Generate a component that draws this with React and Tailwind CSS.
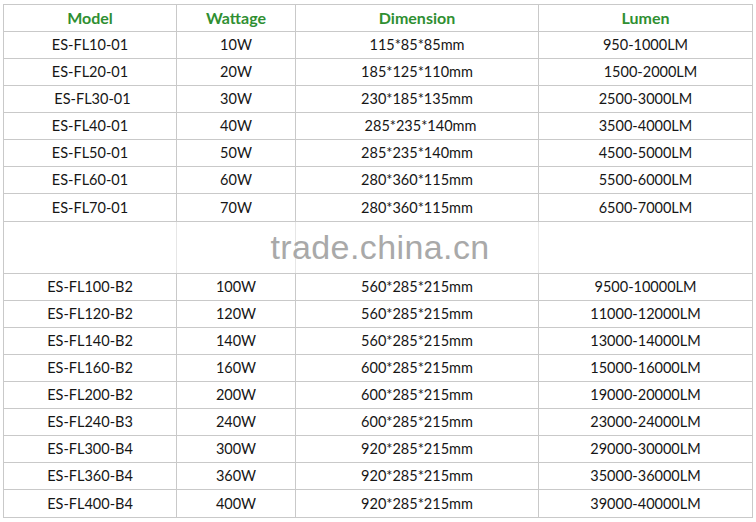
const TOP_ROWS = [
  ['ES-FL10-01', '10W', '115*85*85mm', '950-1000LM'],
  ['ES-FL20-01', '20W', '185*125*110mm', '1500-2000LM'],
  ['ES-FL30-01', '30W', '230*185*135mm', '2500-3000LM'],
  ['ES-FL40-01', '40W', '285*235*140mm', '3500-4000LM'],
  ['ES-FL50-01', '50W', '285*235*140mm', '4500-5000LM'],
  ['ES-FL60-01', '60W', '280*360*115mm', '5500-6000LM'],
  ['ES-FL70-01', '70W', '280*360*115mm', '6500-7000LM'],
];

const BOTTOM_ROWS = [
  ['ES-FL100-B2', '100W', '560*285*215mm', '9500-10000LM'],
  ['ES-FL120-B2', '120W', '560*285*215mm', '11000-12000LM'],
  ['ES-FL140-B2', '140W', '560*285*215mm', '13000-14000LM'],
  ['ES-FL160-B2', '160W', '600*285*215mm', '15000-16000LM'],
  ['ES-FL200-B2', '200W', '600*285*215mm', '19000-20000LM'],
  ['ES-FL240-B3', '240W', '600*285*215mm', '23000-24000LM'],
  ['ES-FL300-B4', '300W', '920*285*215mm', '29000-30000LM'],
  ['ES-FL360-B4', '360W', '920*285*215mm', '35000-36000LM'],
  ['ES-FL400-B4', '400W', '920*285*215mm', '39000-40000LM'],
];

const HEADERS = ['Model', 'Wattage', 'Dimension', 'Lumen'];

const NUDGE = {
  'ES-FL30-01': 'pl-[5px]',
  '1500-2000LM': 'pl-[10px]',
  '285*235*140mm|3': 'pl-[7px]',
};

const cell = 'flex items-center justify-center border-r border-b border-[#c9c9c9]';

function Row({ cells, tall, idx }) {
  return cells.map((c, i) => (
    <div
      key={i}
      className={`${cell} ${tall ? 'h-[28px]' : 'h-[27px]'} text-[14.5px] text-[#161616] ${NUDGE[c] || NUDGE[`${c}|${idx}`] || ''}`}
    >
      {c}
    </div>
  ));
}

export default function App() {
  return (
    <div className="w-[756px] h-[522px] bg-white pl-[3px] pt-[4px] font-['Lato','Liberation_Sans',sans-serif]">
      <div className="grid grid-cols-[173px_119px_243px_214px] w-[750px] border-l border-t border-[#c9c9c9]">
        {/* Header */}
        {HEADERS.map((h) => (
          <div key={h} className={`${cell} h-[27px] text-[16px] font-bold text-[#2f8f32]`}>
            {h}
          </div>
        ))}

        {TOP_ROWS.map((r, i) => (
          <Row key={r[0]} cells={r} idx={i} tall={i === TOP_ROWS.length - 1} />
        ))}

        {/* Watermark band */}
        <div className="relative col-span-4 h-[52px] grid grid-cols-[173px_119px_243px_214px] border-b border-[#c9c9c9]">
          <div className="border-r border-[#e6e6e6]" />
          <div className="border-r border-[#e6e6e6]" />
          <div className="border-r border-[#e6e6e6]" />
          <div className="border-r border-[#c9c9c9]" />
          <div className="absolute inset-0 flex items-center justify-center pl-[3px] pb-[2px]">
            <span className="font-['Liberation_Sans',sans-serif] text-[34px] tracking-[0.4px] text-[#a9a9a9] leading-none">
              trade.china.cn
            </span>
          </div>
        </div>

        {BOTTOM_ROWS.map((r, i) => (
          <Row key={r[0]} cells={r} idx={-1} tall={i === BOTTOM_ROWS.length - 1} />
        ))}
      </div>
    </div>
  );
}
